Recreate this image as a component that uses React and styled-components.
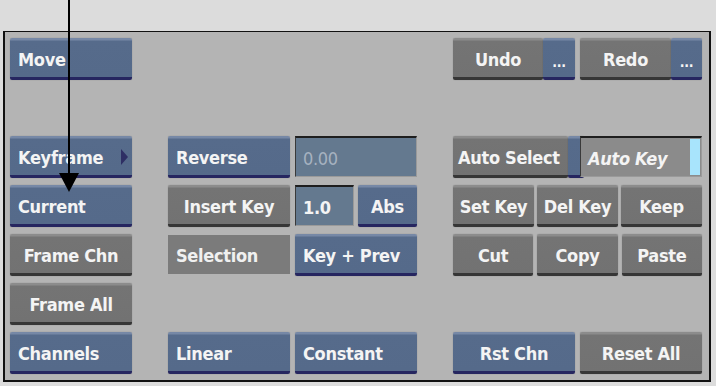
import styled, { createGlobalStyle, css } from "styled-components";

const GlobalStyle = createGlobalStyle`
  html, body {
    margin: 0;
    padding: 0;
    background: #dcdcdc;
  }
  body {
    width: 716px;
    height: 386px;
    overflow: hidden;
    position: relative;
    font-family: "DejaVu Sans Condensed", "DejaVu Sans", sans-serif;
  }
`;

const Page = styled.div`
  padding: 31px 0 0 3px;
`;

const Panel = styled.div`
  box-sizing: border-box;
  width: 708px;
  height: 351px;
  background: #b4b4b4;
  border: 1px solid #111;
  border-width: 1px 2px 2px 2px;
  padding: 6px 0 0 5px;
  display: flex;
  gap: 36px;
`;

const Section = styled.div`
  display: grid;
  grid-template-columns: ${(p) => (p.$cols === 2 ? "122px 122px" : "122px")};
  grid-template-rows: repeat(7, 42px);
  column-gap: 5px;
  row-gap: 7px;
`;

const Span = styled.div`
  grid-column: ${(p) => p.$col || "1 / -1"};
  grid-row: ${(p) => p.$row};
  display: flex;
  gap: ${(p) => p.$gap || 4}px;
`;

const blue = css`
  background: linear-gradient(#7688a6 0, #7688a6 2px, #566b8b 3px, #556a8a 100%);
  border-bottom: 3px solid #262660;
`;

const grey = css`
  background: linear-gradient(#8c8c8c 0, #8c8c8c 2px, #747474 3px, #727272 100%);
  border-bottom: 3px solid #363636;
`;

const Button = styled.div`
  box-sizing: border-box;
  height: 42px;
  grid-row: ${(p) => p.$row || "auto"};
  flex: ${(p) => (p.$w ? `0 0 ${p.$w}px` : "1 1 0")};
  ${(p) => (p.$kind === "grey" ? grey : blue)}
  border-radius: 2px;
  box-shadow: 0 0 1px rgba(0, 0, 0, 0.35);
  display: flex;
  align-items: center;
  justify-content: ${(p) => (p.$center ? "center" : "flex-start")};
  padding: 3px ${(p) => (p.$center ? 0 : 8)}px 0 ${(p) => (p.$pl ?? (p.$center ? 0 : 8))}px;
  color: #f4f4f4;
  font-weight: bold;
  font-size: 18px;
  letter-spacing: -0.3px;
  white-space: nowrap;
  position: relative;
`;

const MoreButton = styled(Button)`
  padding: 8px 0 0 0;
  justify-content: center;
  font-size: 14px;
`;

const Caret = styled.span`
  position: absolute;
  right: 4px;
  top: 13px;
  width: 0;
  height: 0;
  border-top: 8px solid transparent;
  border-bottom: 8px solid transparent;
  border-left: 7px solid #2e2f64;
`;

const Field = styled.div`
  box-sizing: border-box;
  height: 41px;
  grid-row: ${(p) => p.$row || "auto"};
  flex: ${(p) => (p.$w ? `0 0 ${p.$w}px` : "1 1 0")};
  background: ${(p) => (p.$grey ? "#8b8b8b" : "#64798f")};
  border-top: 2px solid #1e1e1e;
  border-left: 1px solid #3a3a3a;
  border-right: 1px solid #9a9a9a;
  border-bottom: 1px solid #9a9a9a;
  display: flex;
  align-items: center;
  padding: 2px 0 0 7px;
  color: ${(p) => (p.$dim ? "#a6b2c0" : "#f4f4f4")};
  font-weight: ${(p) => (p.$dim ? "normal" : "bold")};
  font-style: ${(p) => (p.$italic ? "italic" : "normal")};
  font-size: 18px;
  letter-spacing: -0.3px;
  position: relative;
`;

const Indicator = styled.span`
  position: absolute;
  right: 1px;
  top: 1px;
  bottom: 1px;
  width: 10px;
  background: #a8e4fc;
`;

const Label = styled.div`
  box-sizing: border-box;
  height: 39px;
  margin-top: 1px;
  grid-row: ${(p) => p.$row};
  background: #7b7b7b;
  display: flex;
  align-items: center;
  padding: 2px 0 0 8px;
  color: #f0f0f0;
  font-weight: bold;
  font-size: 18px;
  letter-spacing: -0.3px;
`;

const SplitButton = styled.div`
  grid-row: ${(p) => p.$row};
  display: flex;
`;

const Arrow = styled.svg`
  position: absolute;
  left: 58px;
  top: 0;
`;

export default function App() {
  return (
    <>
      <GlobalStyle />
      <Page>
        <Panel>
          <Section>
            <Button $row={1}>Move</Button>
            <Button $row={3}>
              Keyframe
              <Caret />
            </Button>
            <Button $row={4}>Current</Button>
            <Button $row={5} $kind="grey" $center>Frame Chn</Button>
            <Button $row={6} $kind="grey" $center>Frame All</Button>
            <Button $row={7}>Channels</Button>
          </Section>

          <Section $cols={2}>
            <Button $row={3}>Reverse</Button>
            <Field $row={3} $dim>0.00</Field>
            <Button $row={4} $kind="grey" $center>Insert Key</Button>
            <Span $row={4} $col="2">
              <Field $w={59}>1.0</Field>
              <Button $center>Abs</Button>
            </Span>
            <Label $row={5}>Selection</Label>
            <Button $row={5}>Key + Prev</Button>
            <Button $row={7}>Linear</Button>
            <Button $row={7}>Constant</Button>
          </Section>

          <Section $cols={2}>
            <SplitButton $row={1}>
              <Button $kind="grey" $center>Undo</Button>
              <MoreButton $w={32}>...</MoreButton>
            </SplitButton>
            <SplitButton $row={1}>
              <Button $kind="grey" $center>Redo</Button>
              <MoreButton $w={31}>...</MoreButton>
            </SplitButton>
            <SplitButton $row={3}>
              <Button $kind="grey" $pl={5}>Auto Select</Button>
              <Button $w={12} />
            </SplitButton>
            <Field $row={3} $grey $italic>
              Auto Key
              <Indicator />
            </Field>
            <Span $row={4} $gap={3}>
              <Button $kind="grey" $center>Set Key</Button>
              <Button $kind="grey" $center>Del Key</Button>
              <Button $kind="grey" $center>Keep</Button>
            </Span>
            <Span $row={5} $gap={4}>
              <Button $kind="grey" $center>Cut</Button>
              <Button $kind="grey" $center>Copy</Button>
              <Button $kind="grey" $center>Paste</Button>
            </Span>
            <Button $row={7} $center>Rst Chn</Button>
            <Button $row={7} $kind="grey" $center>Reset All</Button>
          </Section>
        </Panel>
      </Page>
      <Arrow width="22" height="194" viewBox="0 0 22 194">
        <rect x="10" y="0" width="2" height="178" fill="#000" />
        <polygon points="1,173 21,173 11,192" fill="#000" />
      </Arrow>
    </>
  );
}
